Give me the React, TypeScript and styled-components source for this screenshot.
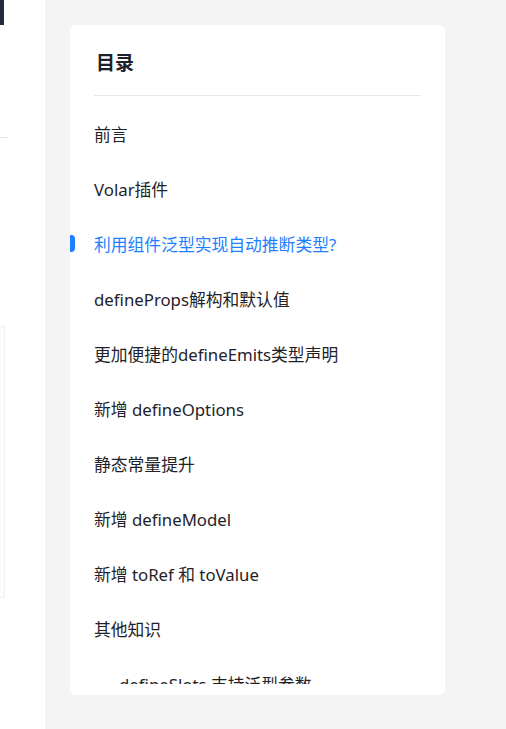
import React from "react";
import styled, { createGlobalStyle } from "styled-components";

const Global = createGlobalStyle`
  html, body { margin: 0; padding: 0; background: #f4f4f4; }
  body { font-family: "Noto Sans", "Noto Sans CJK SC", sans-serif; }
  * { box-sizing: border-box; }
`;

const Page = styled.div`
  display: flex;
  width: 506px;
  height: 729px;
  overflow: hidden;
`;

const ArticleEdge = styled.div`
  width: 45px;
  flex: none;
  background: #ffffff;
  display: flex;
  flex-direction: column;
`;

const DarkBlock = styled.div`
  width: 4px;
  height: 25px;
  background: #232a3b;
`;

const Rule = styled.div`
  margin-top: 112px;
  width: 8px;
  height: 1px;
  background: #e2e2e2;
`;

const CodeBox = styled.div`
  margin-top: 188px;
  width: 5px;
  height: 272px;
  border: 1px solid #f0f0f0;
  border-left: none;
  background: #fcfcfc;
`;

const Side = styled.div`
  flex: 1;
  background: #f4f4f4;
  padding: 25px 0 0 25px;
`;

const Card = styled.div`
  width: 375px;
  height: 670px;
  background: #ffffff;
  border-radius: 6px;
  padding: 0 0 11px;
  display: flex;
  flex-direction: column;
`;

const Header = styled.div`
  margin: 0 24px;
  padding: 24px 0 20px 2px;
  border-bottom: 1px solid #e6e7eb;
  font-family: "Noto Sans CJK SC", sans-serif;
  font-size: 19px;
  line-height: 26px;
  font-weight: 700;
  color: #1d2129;
`;

const List = styled.ul`
  list-style: none;
  margin: 0;
  padding: 10px 24px 0;
  flex: 1;
  overflow: hidden;
`;

const Item = styled.li<{ $active?: boolean; $level?: number }>`
  position: relative;
  height: 55px;
  display: flex;
  align-items: center;
  padding-left: ${(p) => (p.$level ? 25 : 0)}px;
  font-family: "Noto Sans", "Noto Sans CJK SC", sans-serif;
  font-size: 16.8px;
  color: ${(p) => (p.$active ? "#1e80ff" : "#1f2329")};
  white-space: nowrap;
`;

const Marker = styled.span`
  position: absolute;
  left: -24px;
  top: 50%;
  width: 5px;
  height: 17px;
  margin-top: -9px;
  border-radius: 0 4px 4px 0;
  background: #1e80ff;
`;

const items: { text: string; active?: boolean; level?: number }[] = [
  { text: "前言" },
  { text: "Volar插件" },
  { text: "利用组件泛型实现自动推断类型?", active: true },
  { text: "defineProps解构和默认值" },
  { text: "更加便捷的defineEmits类型声明" },
  { text: "新增 defineOptions" },
  { text: "静态常量提升" },
  { text: "新增 defineModel" },
  { text: "新增 toRef 和 toValue" },
  { text: "其他知识" },
  { text: "defineSlots 支持泛型参数", level: 1 },
];

export default function App() {
  return (
    <>
      <Global />
      <Page>
        <ArticleEdge>
          <DarkBlock />
          <Rule />
          <CodeBox />
        </ArticleEdge>
        <Side>
          <Card>
            <Header>目录</Header>
            <List>
              {items.map((it) => (
                <Item key={it.text} $active={it.active} $level={it.level}>
                  {it.active && <Marker />}
                  {it.text}
                </Item>
              ))}
            </List>
          </Card>
        </Side>
      </Page>
    </>
  );
}
